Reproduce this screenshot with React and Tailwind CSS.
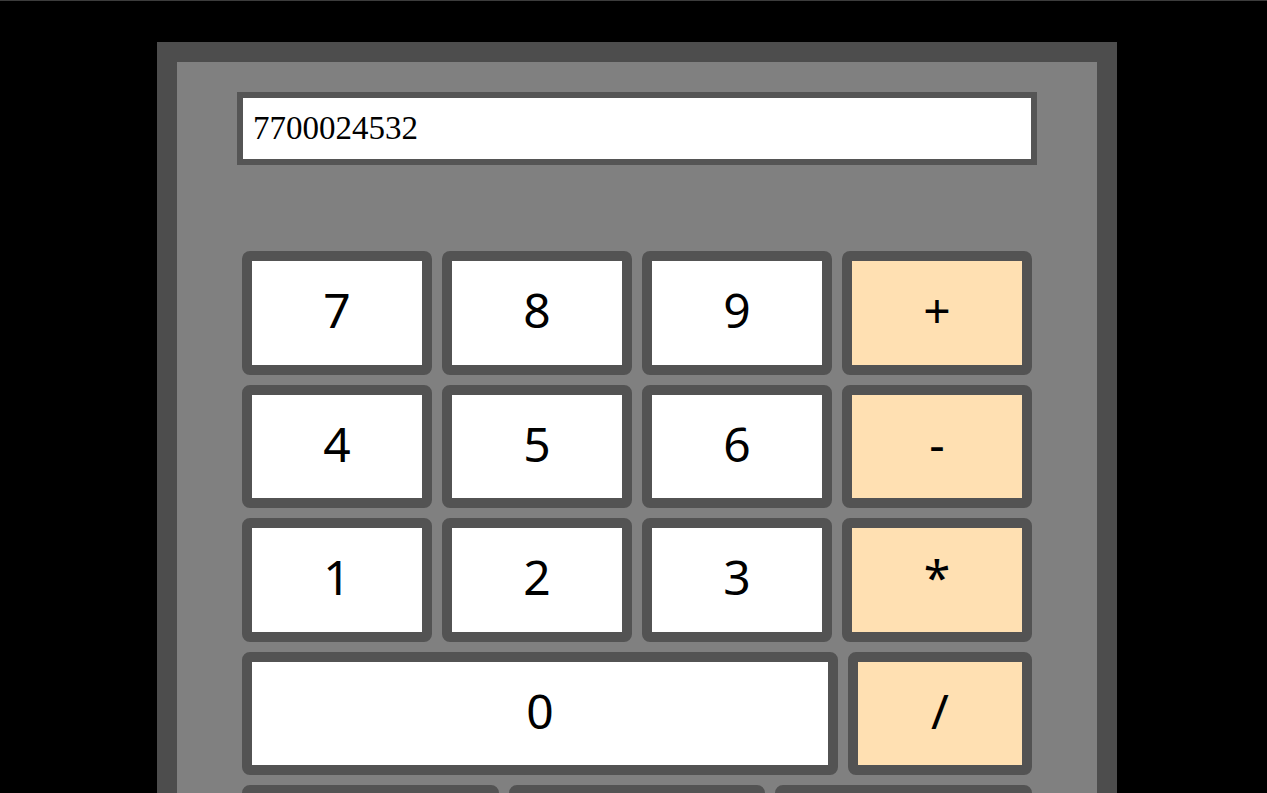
const rows = [
    [{ label: "7" }, { label: "8" }, { label: "9" }, { label: "+", op: true }],
    [{ label: "4" }, { label: "5" }, { label: "6" }, { label: "-", op: true }],
    [{ label: "1" }, { label: "2" }, { label: "3" }, { label: "*", op: true }],
];

const Key = ({ label, op, className = "" }) => (
    <button
        className={
            "h-[123.5px] rounded-[8px] border-[10px] border-[#535353] flex items-center justify-center pb-[5px] text-[48px] text-black font-['Noto_Sans',sans-serif] " +
            (op ? "bg-[#ffe0b2] " : "bg-white ") +
            className
        }
    >
        {label}
    </button>
);

const App = () => {
    return (
        <div className="min-h-screen bg-black border-t border-[#3c3c3c] overflow-hidden">
            <div className="ml-[157px] mt-[41px] w-[960px] border-[20px] border-[#4d4d4d] bg-[#808080] pt-[30px] pb-[40px]">
                <div className="mx-auto w-[800px] h-[73px] border-[6px] border-[#555555] bg-white flex items-center px-[10px] text-[33px] text-black font-['Liberation_Serif',serif]">
                    7700024532
                </div>
                <div className="mx-auto mt-[86px] w-[790px] flex flex-col gap-[10px]">
                    {rows.map((row, i) => (
                        <div key={i} className="grid grid-cols-4 gap-[10px]">
                            {row.map((k) => (
                                <Key key={k.label} label={k.label} op={k.op} />
                            ))}
                        </div>
                    ))}
                    <div className="flex gap-[10px]">
                        <Key label="0" className="w-[596px]" />
                        <Key label="/" op className="w-[184px]" />
                    </div>
                    <div className="grid grid-cols-3 gap-[10px]">
                        <Key label="C" />
                        <Key label="." />
                        <Key label="=" op />
                    </div>
                </div>
            </div>
        </div>
    );
};

export default App;
